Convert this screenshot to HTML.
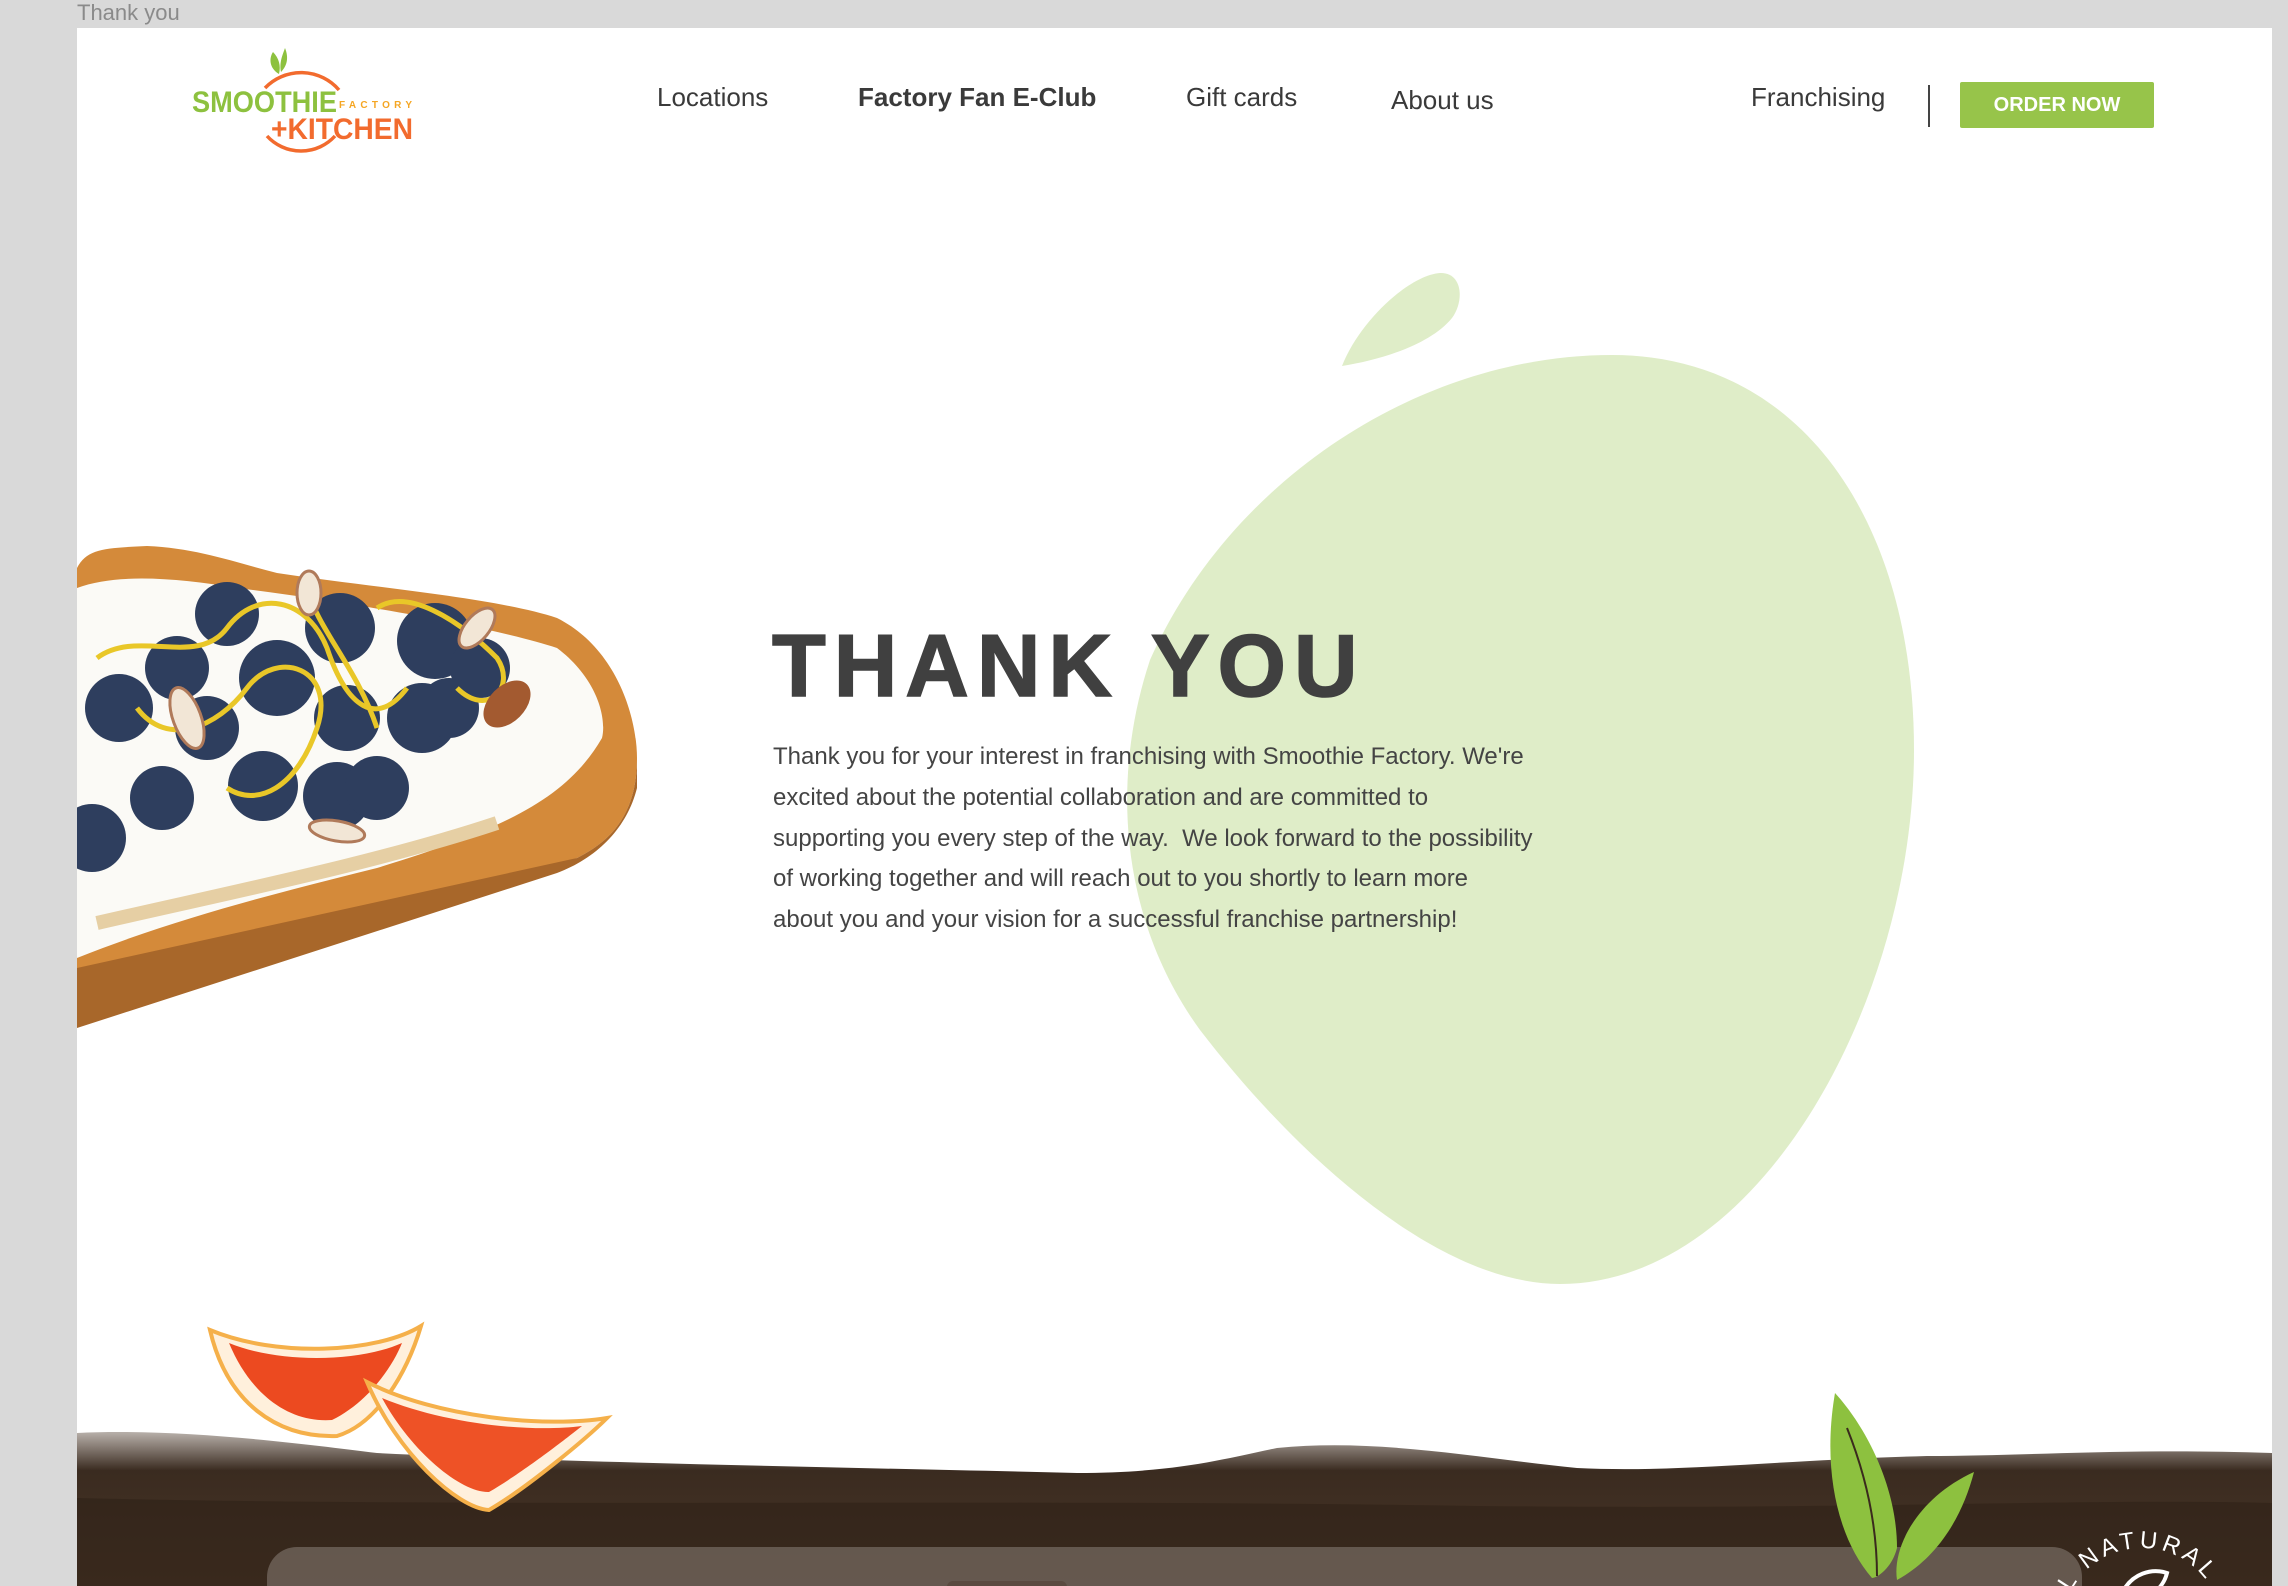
<!DOCTYPE html>
<html><head><meta charset="utf-8">
<style>
*{margin:0;padding:0;box-sizing:border-box}
html,body{width:2288px;height:1586px;overflow:hidden;background:#d9d9d9;font-family:"Liberation Sans",sans-serif}
.tab{position:absolute;left:77px;top:0;font-size:22px;color:#8a8a8a;line-height:26px}
.page{position:absolute;left:77px;top:28px;width:2195px;height:1558px;background:#fff;overflow:hidden}
.nav{position:absolute;font-size:26px;color:#3a3a3a;white-space:nowrap}
.btn{position:absolute;left:1883px;top:54px;width:194px;height:46px;background:#97c44a;border-radius:2px;color:#fff;font-weight:bold;font-size:20px;text-align:center;line-height:46px}
.div{position:absolute;left:1851px;top:57px;width:2px;height:42px;background:#444}
h1{position:absolute;left:695px;top:588px;font-size:88px;line-height:100px;font-weight:900;letter-spacing:8px;color:#404040;-webkit-text-stroke:1.5px #404040}
.p{position:absolute;left:696px;top:709px;font-size:24px;line-height:40.8px;color:#444;white-space:nowrap}
</style></head><body>
<div class="tab">Thank you</div>
<div class="page">
<svg width="2195" height="1558" style="position:absolute;left:0;top:0">
  <path d="M1535,327 C1723,327 1837,492 1837,722 C1837,972 1683,1256 1483,1256 C1363,1256 1223,1132 1123,1002 C1043,892 1033,752 1073,632 C1153,452 1343,327 1535,327 Z" fill="#dfedc8"/>
  <path d="M1265,338 C1283,292 1333,247 1363,245 C1385,244 1388,272 1375,290 C1353,317 1303,332 1265,338 Z" fill="#dfedc8"/>
  <g>
    <path d="M188,60 A50,50 0 0 1 262,62" fill="none" stroke="#f26b2e" stroke-width="3.5"/>
    <path d="M190,108 A46,46 0 0 0 258,108" fill="none" stroke="#f26b2e" stroke-width="3.5"/>
    <path d="M202,46 C192,40 192,30 196,24 C202,30 204,38 202,46 Z M204,44 C202,34 206,26 208,20 C212,30 210,38 204,44 Z" fill="#8dc13f"/>
    <text x="115" y="84" font-weight="bold" font-size="30" fill="#8dc13f" textLength="145" lengthAdjust="spacingAndGlyphs">SMOOTHIE</text>
    <text x="262" y="80" font-weight="bold" font-size="10" fill="#f5a623" textLength="73" lengthAdjust="spacing">FACTORY</text>
    <text x="194" y="111" font-weight="bold" font-size="30" fill="#f26b2e" textLength="142" lengthAdjust="spacingAndGlyphs">+KITCHEN</text>
  </g>
  <g>
    <path d="M0,540 C10,520 30,520 70,518 C120,520 160,535 200,545 C300,560 420,570 480,590 C540,620 560,690 560,730 C560,790 530,815 500,830 L0,990 Z" fill="#d48a3a"/>
    <path d="M0,940 L500,830 C530,815 560,790 560,730 L560,760 C550,800 520,830 480,845 L0,1000 Z" fill="#a8672a"/>
    <path d="M0,560 C40,545 100,550 160,560 C280,575 420,600 480,620 C520,650 530,690 525,710 C490,770 430,800 300,840 C200,865 100,890 0,930 Z" fill="#fbfaf6"/>
    <path d="M20,895 C150,865 300,835 420,795" stroke="#e6cfa4" stroke-width="14" fill="none"/>
    <g fill="#2e3e5e">
      <circle cx="150" cy="586" r="32"/><circle cx="200" cy="650" r="38"/><circle cx="100" cy="640" r="32"/>
      <circle cx="263" cy="600" r="35"/><circle cx="270" cy="690" r="33"/><circle cx="358" cy="613" r="38"/>
      <circle cx="403" cy="640" r="30"/><circle cx="345" cy="690" r="35"/><circle cx="42" cy="680" r="34"/>
      <circle cx="130" cy="700" r="32"/><circle cx="186" cy="758" r="35"/><circle cx="260" cy="768" r="34"/>
      <circle cx="85" cy="770" r="32"/><circle cx="15" cy="810" r="34"/><circle cx="372" cy="680" r="30"/>
      <circle cx="300" cy="760" r="32"/>
    </g>
    <g fill="none" stroke="#e9c728" stroke-width="5">
      <path d="M20,630 C60,600 120,640 150,600 C180,560 230,570 250,620 C270,680 300,700 330,660"/>
      <path d="M60,680 C90,720 140,700 170,660 C200,620 260,640 240,700 C220,760 180,780 150,760"/>
      <path d="M300,580 C330,560 380,590 420,630 C440,660 410,690 380,660"/>
      <path d="M230,560 C240,600 280,640 300,700"/>
    </g>
    <g fill="#f2e6d6" stroke="#b07a5a" stroke-width="3">
      <ellipse cx="110" cy="690" rx="14" ry="32" transform="rotate(-20 110 690)"/>
      <ellipse cx="400" cy="600" rx="12" ry="24" transform="rotate(40 400 600)"/>
      <ellipse cx="260" cy="803" rx="28" ry="10" transform="rotate(10 260 803)"/>
      <ellipse cx="232" cy="565" rx="12" ry="22"/>
    </g>
    <ellipse cx="430" cy="676" rx="18" ry="28" transform="rotate(45 430 676)" fill="#a35a30"/>
  </g>
  <defs>
    <linearGradient id="w" x1="0" y1="0" x2="0" y2="1">
      <stop offset="0" stop-color="#b8b0aa"/><stop offset="0.25" stop-color="#3a2b20"/><stop offset="1" stop-color="#4a3626"/>
    </linearGradient>
  </defs>
  <path d="M0,1405 C100,1400 220,1415 300,1425 C500,1435 800,1440 1000,1445 C1100,1445 1150,1430 1200,1420 C1300,1410 1400,1430 1500,1440 C1600,1445 1700,1432 1850,1428 C1950,1428 2050,1420 2195,1425 L2195,1558 L0,1558 Z" fill="url(#w)"/>
  <path d="M0,1470 C400,1480 900,1470 1400,1478 C1800,1482 2000,1470 2195,1475 L2195,1558 L0,1558 Z" fill="#2e2118" opacity="0.6"/>
  <rect x="190" y="1519" width="1815" height="80" rx="30" fill="#8a8078" opacity="0.55"/>
  <rect x="870" y="1553" width="120" height="20" rx="6" fill="#5a4a40"/>
  <g>
    <path d="M133,1302 C150,1375 200,1410 260,1408 C300,1396 330,1345 344,1298 C300,1325 200,1330 133,1302 Z" fill="#fff0dc" stroke="#f5b04a" stroke-width="4"/>
    <path d="M152,1315 C175,1370 215,1395 255,1392 C290,1375 315,1340 325,1315 C280,1335 200,1335 152,1315 Z" fill="#ec4a20"/>
    <path d="M290,1354 C320,1425 380,1480 412,1482 C450,1460 510,1410 530,1390 C470,1400 360,1390 290,1354 Z" fill="#fff0dc" stroke="#f5b04a" stroke-width="4"/>
    <path d="M305,1370 C335,1425 385,1465 412,1464 C445,1445 490,1410 505,1398 C450,1405 365,1395 305,1370 Z" fill="#ee5226"/>
  </g>
  <path d="M1758,1365 C1790,1400 1820,1460 1820,1520 C1815,1540 1800,1550 1795,1550 C1760,1510 1745,1440 1758,1365 Z" fill="#8dc13f"/>
  <path d="M1897,1444 C1885,1490 1860,1530 1820,1552 C1815,1520 1840,1470 1897,1444 Z" fill="#8dc13f"/>
  <path d="M1770,1400 C1790,1450 1800,1500 1800,1548" stroke="#3a2a1d" stroke-width="2" fill="none"/>
  <defs><path id="c" d="M1985,1600 A80,80 0 1 1 2145,1600"/></defs>
  <text font-size="24" fill="#fff" letter-spacing="4"><textPath href="#c">ALL NATURAL - A</textPath></text>
  <path d="M2045,1565 C2055,1545 2075,1540 2090,1545 C2085,1565 2065,1575 2045,1565 Z" fill="none" stroke="#fff" stroke-width="4"/>
</svg>
<div class="nav" style="left:580px;top:54px">Locations</div>
<div class="nav" style="left:781px;top:54px;font-weight:bold">Factory Fan E-Club</div>
<div class="nav" style="left:1109px;top:54px">Gift cards</div>
<div class="nav" style="left:1314px;top:57px">About us</div>
<div class="nav" style="left:1674px;top:54px">Franchising</div>
<div class="div"></div>
<div class="btn">ORDER NOW</div>
<h1>THANK YOU</h1>
<div class="p">Thank you for your interest in franchising with Smoothie Factory. We're<br>excited about the potential collaboration and are committed to<br>supporting you every step of the way.&nbsp; We look forward to the possibility<br>of working together and will reach out to you shortly to learn more<br>about you and your vision for a successful franchise partnership!</div>
</div>
<div style="position:absolute;left:2272px;top:28px;width:16px;height:1558px;background:#d9d9d9"></div>
</body></html>
